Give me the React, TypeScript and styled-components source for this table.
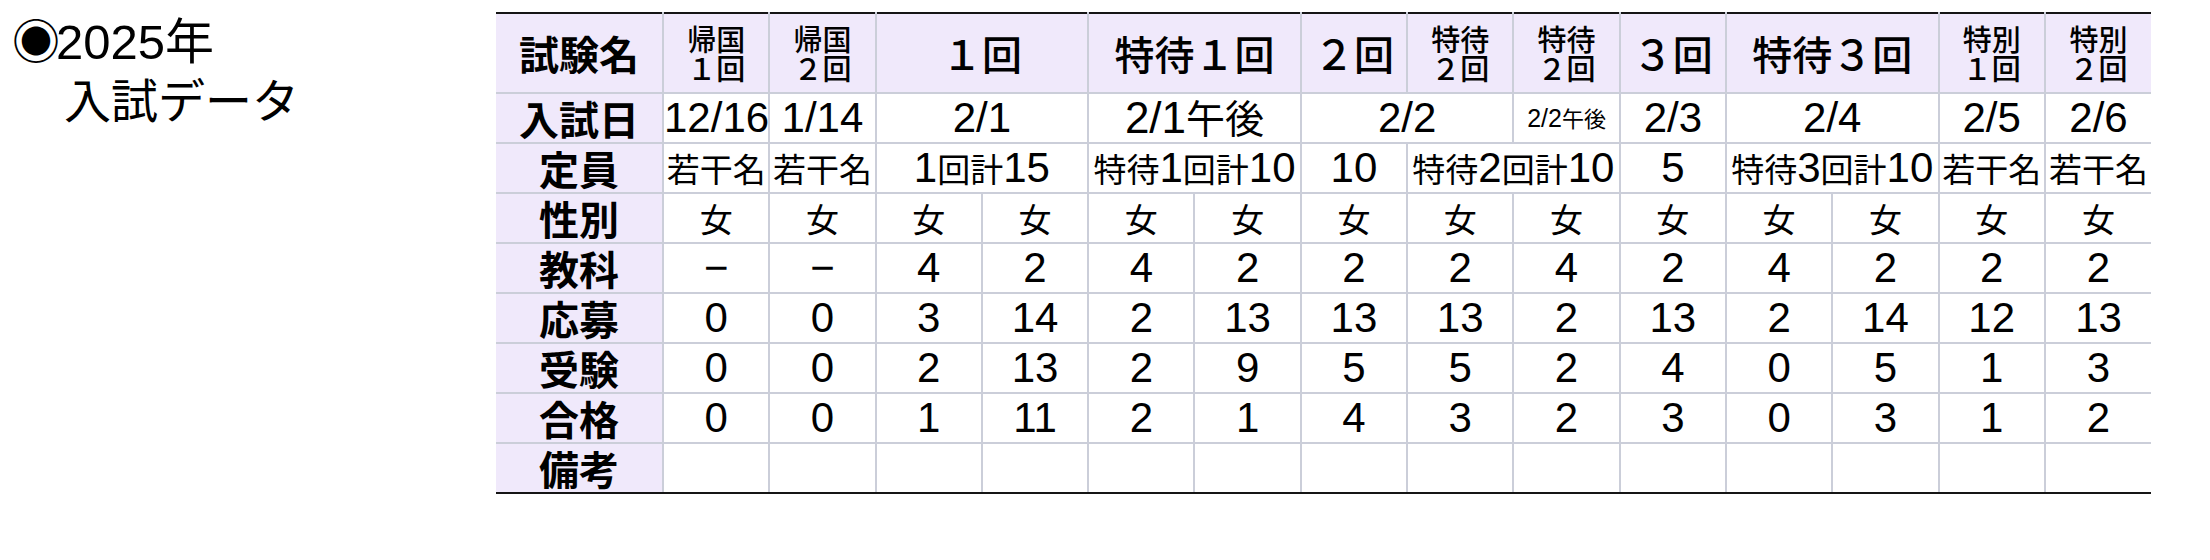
import React from 'react';
import styled, { createGlobalStyle } from 'styled-components';

const LAVENDER = '#f0e9fb';
const GRID = '#cbced9';
const INK = '#151515';

const GlobalStyle = createGlobalStyle`
  html, body {
    margin: 0;
    padding: 0;
    background: #fff;
  }
  body {
    font-family: "Liberation Sans", "Noto Sans CJK JP", sans-serif;
    color: #000;
  }
`;

const Page = styled.div`
  display: flex;
  align-items: flex-start;
  width: 2210px;
  height: 560px;
  padding: 12px 0 0 12px;
  box-sizing: border-box;
`;

const Title = styled.h1`
  flex: none;
  width: 484px;
  margin: -4px 0 0;
  font-family: "Liberation Sans", "Noto Sans CJK JP", sans-serif;
  font-weight: normal;
  font-size: 48px;
  line-height: 60px;
`;

const TitleLine = styled.div<{ $indent?: number; $size?: number }>`
  padding-left: ${(p) => p.$indent ?? 0}px;
  font-size: ${(p) => p.$size ?? 48}px;
  white-space: nowrap;
`;

const Mark = styled.span`
  font-family: "Noto Sans CJK JP", sans-serif;
  font-size: 48px;
  margin-right: -4px;
`;

const Table = styled.table`
  border-collapse: collapse;
  table-layout: fixed;
  width: 1655px;
`;

const HeadRow = styled.tr`
  height: 80px;
`;

const BodyRow = styled.tr`
  height: 50px;
`;

const cellBase = `
  border: 2px solid ${GRID};
  padding: 0;
  text-align: center;
  vertical-align: middle;
  white-space: nowrap;
  overflow: visible;
`;

const Label = styled.th<{ $top?: boolean; $last?: boolean }>`
  ${cellBase}
  border-left: none;
  border-top-color: ${(p) => (p.$top ? INK : GRID)};
  border-bottom-color: ${(p) => (p.$last ? INK : GRID)};
  background: ${LAVENDER};
  font-family: "Noto Sans CJK JP", sans-serif;
  font-weight: 700;
  font-size: 40px;
  line-height: 1;
`;

const Head = styled.th<{ $small?: boolean; $end?: boolean }>`
  ${cellBase}
  border-top-color: ${INK};
  ${(p) => (p.$end ? 'border-right: none;' : '')}
  background: ${LAVENDER};
  font-family: "Noto Sans CJK JP", sans-serif;
  font-weight: 500;
  font-size: ${(p) => (p.$small ? 29 : 40)}px;
  line-height: ${(p) => (p.$small ? '29px' : '1')};
  white-space: pre-line;
`;

const Cell = styled.td<{ $last?: boolean; $end?: boolean }>`
  ${cellBase}
  ${(p) => (p.$last ? `border-bottom-color: ${INK};` : '')}
  ${(p) => (p.$end ? 'border-right: none;' : '')}
  font-family: "Noto Sans CJK JP", sans-serif;
  line-height: 1;
`;

const Num = styled.span<{ $size: number }>`
  font-family: "Liberation Sans", sans-serif;
  font-size: ${(p) => p.$size}px;
`;

const Jp = styled.span<{ $size: number }>`
  font-family: "Noto Sans CJK JP", sans-serif;
  font-size: ${(p) => p.$size}px;
`;

const CJK = /([\u3000-\u9fff\uff00-\uffef]+)/;

const Mixed: React.FC<{ text: string; num?: number; jp?: number }> = ({ text, num = 42, jp = 33 }) => (
  <>
    {text
      .split(CJK)
      .filter(Boolean)
      .map((part, i) =>
        CJK.test(part) ? (
          <Jp key={i} $size={jp}>
            {part}
          </Jp>
        ) : (
          <Num key={i} $size={num}>
            {part}
          </Num>
        ),
      )}
  </>
);

type Span = { text: string; span?: number; small?: boolean; num?: number; jp?: number };

const headers: Span[] = [
  { text: '帰国\n１回', small: true },
  { text: '帰国\n２回', small: true },
  { text: '１回', span: 2 },
  { text: '特待１回', span: 2 },
  { text: '２回' },
  { text: '特待\n２回', small: true },
  { text: '特待\n２回', small: true },
  { text: '３回' },
  { text: '特待３回', span: 2 },
  { text: '特別\n１回', small: true },
  { text: '特別\n２回', small: true },
];

const spanRows: { label: string; cells: Span[] }[] = [
  {
    label: '入試日',
    cells: [
      { text: '12/16' },
      { text: '1/14' },
      { text: '2/1', span: 2 },
      { text: '2/1午後', span: 2, num: 44, jp: 39 },
      { text: '2/2', span: 2 },
      { text: '2/2午後', num: 25, jp: 22 },
      { text: '2/3' },
      { text: '2/4', span: 2 },
      { text: '2/5' },
      { text: '2/6' },
    ],
  },
  {
    label: '定員',
    cells: [
      { text: '若干名' },
      { text: '若干名' },
      { text: '1回計15', span: 2 },
      { text: '特待1回計10', span: 2 },
      { text: '10' },
      { text: '特待2回計10', span: 2 },
      { text: '5' },
      { text: '特待3回計10', span: 2 },
      { text: '若干名' },
      { text: '若干名' },
    ],
  },
];

const dataRows: { label: string; values: string[] }[] = [
  { label: '性別', values: Array(14).fill('女') },
  { label: '教科', values: ['−', '−', '4', '2', '4', '2', '2', '2', '4', '2', '4', '2', '2', '2'] },
  { label: '応募', values: ['0', '0', '3', '14', '2', '13', '13', '13', '2', '13', '2', '14', '12', '13'] },
  { label: '受験', values: ['0', '0', '2', '13', '2', '9', '5', '5', '2', '4', '0', '5', '1', '3'] },
  { label: '合格', values: ['0', '0', '1', '11', '2', '1', '4', '3', '2', '3', '0', '3', '1', '2'] },
  { label: '備考', values: Array(14).fill('') },
];

const LABEL_W = 167;
const COL_W = 106.3;

export default function App() {
  return (
    <>
      <GlobalStyle />
      <Page>
        <Title>
          <TitleLine $size={49}>
            <Mark>◉</Mark>2025年
          </TitleLine>
          <TitleLine $indent={52} $size={47}>
            入試データ
          </TitleLine>
        </Title>
        <Table>
          <colgroup>
            <col style={{ width: LABEL_W }} />
            {Array.from({ length: 14 }, (_, i) => (
              <col key={i} style={{ width: COL_W }} />
            ))}
          </colgroup>
          <thead>
            <HeadRow>
              <Label $top>試験名</Label>
              {headers.map((h, i) => (
                <Head key={i} colSpan={h.span ?? 1} $small={h.small} $end={i === headers.length - 1}>
                  {h.text}
                </Head>
              ))}
            </HeadRow>
          </thead>
          <tbody>
            {spanRows.map((row) => (
              <BodyRow key={row.label}>
                <Label>{row.label}</Label>
                {row.cells.map((c, i) => (
                  <Cell key={i} colSpan={c.span ?? 1} $end={i === row.cells.length - 1}>
                    <Mixed text={c.text} num={c.num} jp={c.jp} />
                  </Cell>
                ))}
              </BodyRow>
            ))}
            {dataRows.map((row, r) => {
              const last = r === dataRows.length - 1;
              return (
                <BodyRow key={row.label}>
                  <Label $last={last}>{row.label}</Label>
                  {row.values.map((v, i) => (
                    <Cell key={i} $last={last} $end={i === row.values.length - 1}>
                      <Mixed text={v} />
                    </Cell>
                  ))}
                </BodyRow>
              );
            })}
          </tbody>
        </Table>
      </Page>
    </>
  );
}
